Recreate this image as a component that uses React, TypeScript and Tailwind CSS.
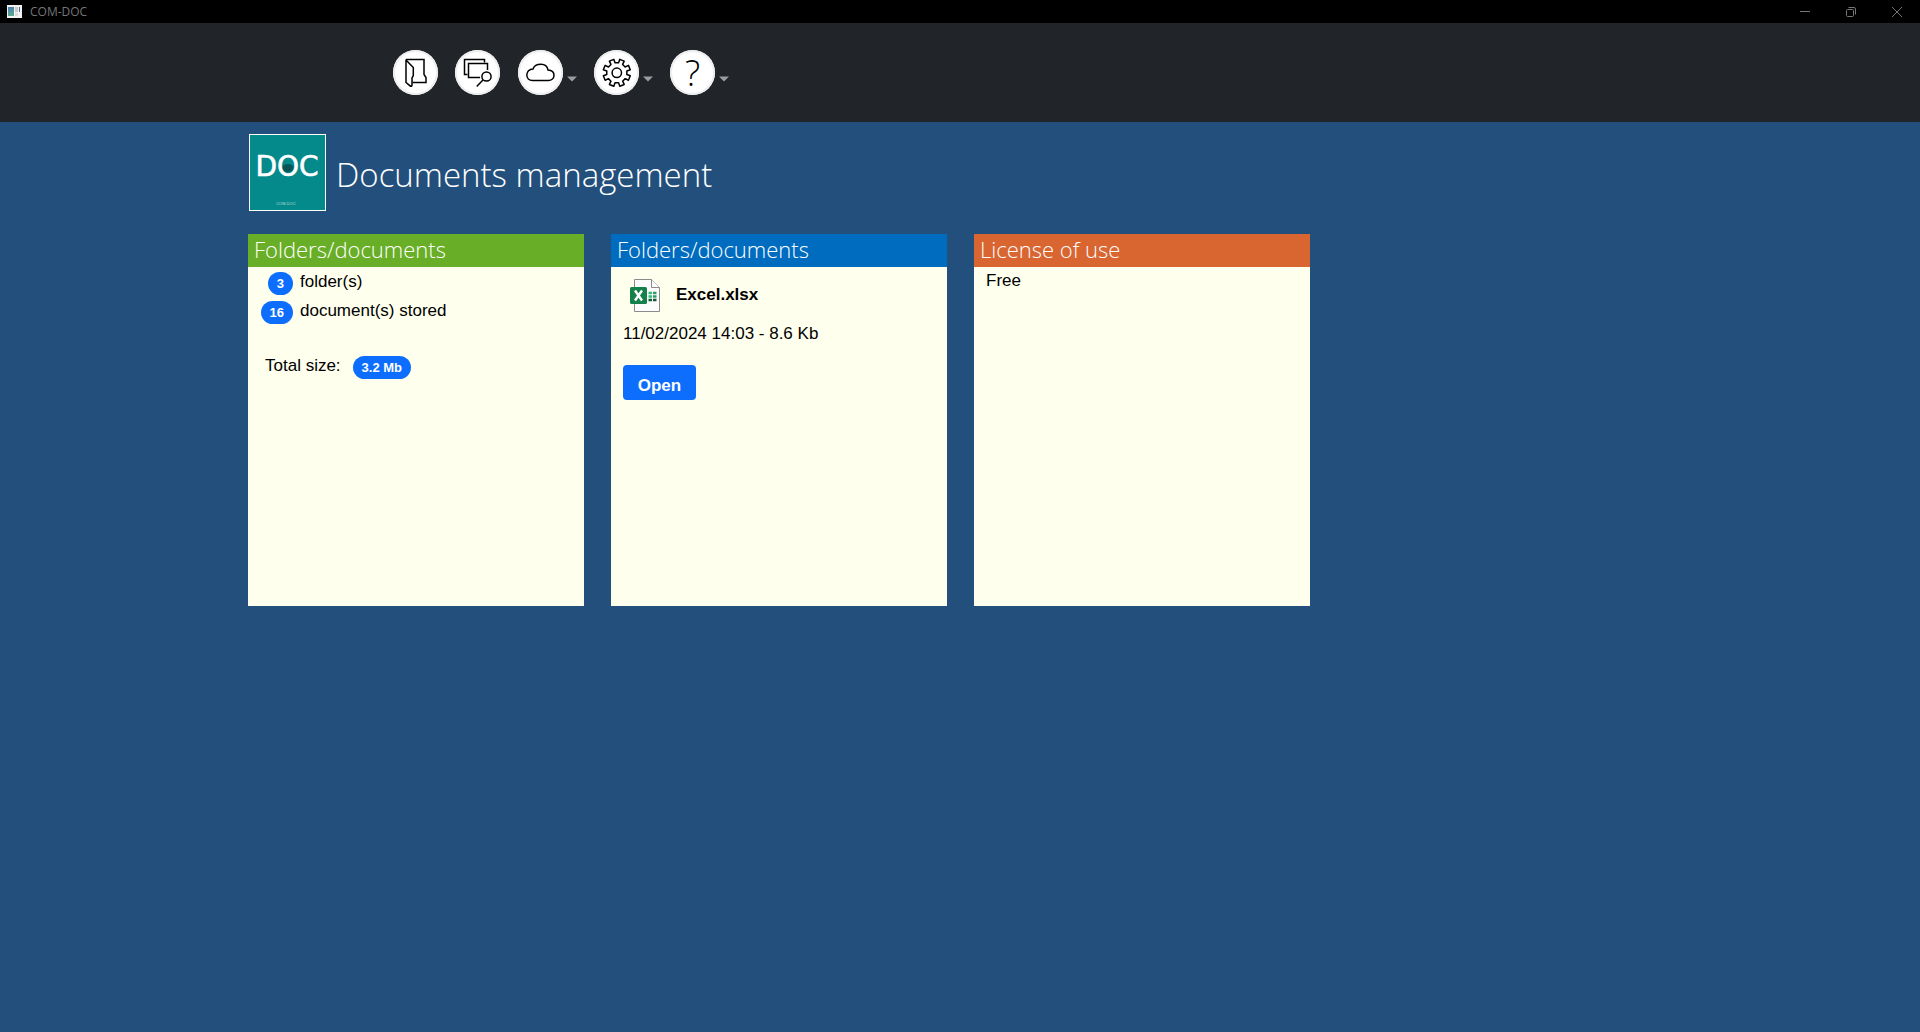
import type { ReactNode } from "react";

const GEAR_CENTER = { x: 22.8, y: 22.8 };

function gearPath() {
  const outer = 13.8;
  const inner = 10.2;
  const points: string[] = [];
  for (let i = 0; i < 8; i++) {
    const mid = i * 45 + 22.5;
    const corners = [
      [mid - 12.5, inner],
      [mid - 10, outer],
      [mid + 10, outer],
      [mid + 12.5, inner],
    ];
    for (const [angle, radius] of corners) {
      const rad = (angle * Math.PI) / 180;
      const x = GEAR_CENTER.x + radius * Math.cos(rad);
      const y = GEAR_CENTER.y + radius * Math.sin(rad);
      points.push(`${x.toFixed(2)} ${y.toFixed(2)}`);
    }
  }
  return `M${points.join("L")}Z`;
}

function NavIcon({ children }: { children: ReactNode }) {
  return (
    <svg
      viewBox="0 0 45 45"
      className="size-[45px] fill-none stroke-black stroke-[1.5]"
      aria-hidden="true"
    >
      {children}
    </svg>
  );
}

function NavButton({
  label,
  menu = false,
  children,
}: {
  label: string;
  menu?: boolean;
  children: ReactNode;
}) {
  return (
    <button
      type="button"
      aria-label={label}
      aria-haspopup={menu ? "menu" : undefined}
      className="flex items-center gap-1 cursor-pointer"
    >
      <span className="flex size-[45px] items-center justify-center rounded-full bg-white shadow-[inset_0_0_0_2px_#eeeeee]">
        {children}
      </span>
      {menu ? (
        <svg viewBox="0 0 10 6" className="mt-3 h-1.5 w-2.5 fill-[#9b9d9f]">
          <path d="M0 .5h10L5 5.5z" />
        </svg>
      ) : (
        ""
      )}
    </button>
  );
}

function TitleBar() {
  return (
    <div className="flex h-[23px] items-center justify-between bg-black text-[#767676]">
      <div className="flex items-center gap-2 pl-[7px]">
        <svg viewBox="0 0 15 13" className="h-[13px] w-[15px]">
          <defs>
            <linearGradient id="preview" x1="0" y1="0" x2="0" y2="1">
              <stop offset="0" stopColor="#4a7fae" />
              <stop offset="1" stopColor="#5cab8c" />
            </linearGradient>
          </defs>
          <rect width="15" height="13" fill="#f2f2f2" />
          <rect x="1" y="2" width="6" height="9" fill="url(#preview)" />
          <rect x="8" y="2" width="3" height="5" fill="#c9c9c9" />
          <rect x="8" y="8" width="3" height="3" fill="#d9d9d9" />
          <rect x="12" y="2" width="1" height="5" fill="#4a6c95" />
        </svg>
        <span className="text-xs">COM-DOC</span>
      </div>
      <div className="flex h-full">
        <button type="button" aria-label="Minimize" className="flex w-[46px] items-center justify-center">
          <svg viewBox="0 0 10 10" className="size-2.5 fill-none stroke-current">
            <path d="M0 4.5h10" />
          </svg>
        </button>
        <button type="button" aria-label="Restore" className="flex w-[46px] items-center justify-center">
          <svg viewBox="0 0 10 10" className="size-2.5 fill-none stroke-current">
            <rect x=".5" y="2.5" width="7" height="7" rx="1" />
            <path d="M2.5 .5H8a1.5 1.5 0 0 1 1.5 1.5v5.5" />
          </svg>
        </button>
        <button type="button" aria-label="Close" className="flex w-[46px] items-center justify-center">
          <svg viewBox="0 0 10 10" className="size-2.5 fill-none stroke-current">
            <path d="M0 0l10 10M10 0L0 10" />
          </svg>
        </button>
      </div>
    </div>
  );
}

function NavBar() {
  return (
    <nav className="flex h-[99px] items-start gap-[18px] bg-[#212529] pt-[27px] pl-[393px]">
      <div className="flex gap-[17px]">
        <NavButton label="Folders">
          <NavIcon>
            <path d="M13 9.5h18V24.5l2 3V32.5H19.5" />
            <path d="M13 9.5V32.5L17.5 36.2q1.5 .3 1.5-1.2V28l1.3-2.5V17.5L13 10" />
          </NavIcon>
        </NavButton>
        <NavButton label="Search documents">
          <NavIcon>
            <path d="M12.5 24.5H9.5V9.5h20V12.5" />
            <path d="M25 27.5H13.5V13.5h19V20" />
            <circle cx="31.5" cy="26.5" r="4.6" />
            <path d="M28.2 29.8L21.7 36.5" />
          </NavIcon>
        </NavButton>
      </div>
      <div className="flex gap-[17px]">
        <NavButton label="Cloud" menu>
          <NavIcon>
            <path d="M14.5 30.5C11 30.5 8.8 28.2 8.8 25s2.5-6 6.2-6c1-3 4-4.7 8-4.7s6.3 2.2 7 5.7c3.7 .2 6 2.3 6 5.3s-2.3 5.2-5.7 5.2z" />
          </NavIcon>
        </NavButton>
        <NavButton label="Settings" menu>
          <NavIcon>
            <path d={gearPath()} strokeLinejoin="round" />
            <circle cx={GEAR_CENTER.x} cy={GEAR_CENTER.y} r="4.7" />
          </NavIcon>
        </NavButton>
        <NavButton label="Help" menu>
          <span className="text-4xl font-light">?</span>
        </NavButton>
      </div>
    </nav>
  );
}

function Logo() {
  return (
    <svg viewBox="0 0 77 77" className="size-[77px]" role="img" aria-label="COM-DOC">
      <rect x=".5" y=".5" width="76" height="76" fill="#058a8c" stroke="#ffffff" />
      <ellipse cx="39" cy="34" rx="6" ry="4" fill="#06494c" opacity=".8" />
      <text
        x="38"
        y="42"
        textAnchor="middle"
        fontSize="28"
        fill="#ffffff"
        stroke="#ffffff"
        strokeWidth=".6"
        className="font-['DejaVu_Sans',sans-serif]"
      >
        DOC
      </text>
      <text
        x="37"
        y="71"
        textAnchor="middle"
        fontSize="4"
        fill="#b5dcdc"
        className="font-['Liberation_Sans',Arial,sans-serif]"
      >
        COM-DOC
      </text>
    </svg>
  );
}

function Badge({ children }: { children: ReactNode }) {
  return (
    <span className="inline-flex h-[23px] items-center rounded-full bg-[#0d6efd] px-[9px] text-[13px] font-bold text-white">
      {children}
    </span>
  );
}

function Card({
  title,
  headerClass,
  children,
}: {
  title: string;
  headerClass: string;
  children: ReactNode;
}) {
  return (
    <section className="min-h-[372px] w-[336px] bg-[#ffffee]">
      <h2 className={`h-[33px] px-1.5 text-[22px] leading-[30px] font-light text-white ${headerClass}`}>
        {title}
      </h2>
      <div className="px-3 font-['Liberation_Sans',Arial,sans-serif] text-[17px] leading-6 text-black">
        {children}
      </div>
    </section>
  );
}

function ExcelIcon() {
  return (
    <svg viewBox="0 0 30 33" className="h-[33px] w-[30px]" aria-hidden="true">
      <path d="M4.5 .5H21.5L29.5 8.5V32.5H4.5z" fill="#fcfcfc" stroke="#8b8b8b" />
      <path d="M21.5 .5V8.5H29.5" fill="#ffffff" stroke="#8b8b8b" />
      <rect x="0" y="8" width="17" height="17" rx="1.5" fill="#15804a" />
      <path d="M5 11.5l7 10M12 11.5l-7 10" stroke="#ffffff" strokeWidth="2.4" />
      <path d="M18.5 14h3.5M18.5 17.5h3.5" stroke="#35b87a" strokeWidth="2.4" />
      <path d="M23 14h3.5M23 17.5h3.5" stroke="#2a9d68" strokeWidth="2.4" />
      <path d="M18.5 21h3.5M23 21h3.5" stroke="#17563a" strokeWidth="2.4" />
    </svg>
  );
}

export default function App() {
  return (
    <div className="min-h-screen bg-[#234f7c] font-['Open_Sans','Noto_Sans',sans-serif]">
      <TitleBar />
      <NavBar />
      <main className="pt-3 pl-[248px]">
        <header className="flex items-center gap-2.5 pl-px">
          <Logo />
          <h1 className="pt-1 text-[33px] font-light text-white">Documents management</h1>
        </header>
        <div className="mt-[23px] flex flex-wrap gap-[27px]">
          <Card title="Folders/documents" headerClass="bg-[#68ae26]">
            <ul className="flex flex-col gap-[5px] pt-[3px]">
              <li className="flex h-6 items-start gap-[7px]">
                <span className="flex w-[33px] justify-end pt-0.5">
                  <Badge>3</Badge>
                </span>
                folder(s)
              </li>
              <li className="flex h-6 items-start gap-[7px]">
                <span className="flex w-[33px] justify-end pt-0.5">
                  <Badge>16</Badge>
                </span>
                document(s) stored
              </li>
            </ul>
            <p className="flex items-start gap-3 pt-[31px] pl-[5px]">
              Total size:
              <span className="flex pt-0.5">
                <Badge>3.2 Mb</Badge>
              </span>
            </p>
          </Card>
          <Card title="Folders/documents" headerClass="bg-[#006cc0]">
            <div className="flex items-center gap-4 pt-3 pl-[7px]">
              <ExcelIcon />
              <span className="pb-0.5 font-bold">Excel.xlsx</span>
            </div>
            <p className="pt-2.5">11/02/2024 14:03 - 8.6 Kb</p>
            <button
              type="button"
              className="mt-[19px] h-[35px] w-[73px] cursor-pointer rounded bg-[#0d6efd] pt-1.5 font-bold text-white"
            >
              Open
            </button>
          </Card>
          <Card title="License of use" headerClass="bg-[#d96531]">
            <p className="pt-0.5">Free</p>
          </Card>
        </div>
      </main>
    </div>
  );
}
